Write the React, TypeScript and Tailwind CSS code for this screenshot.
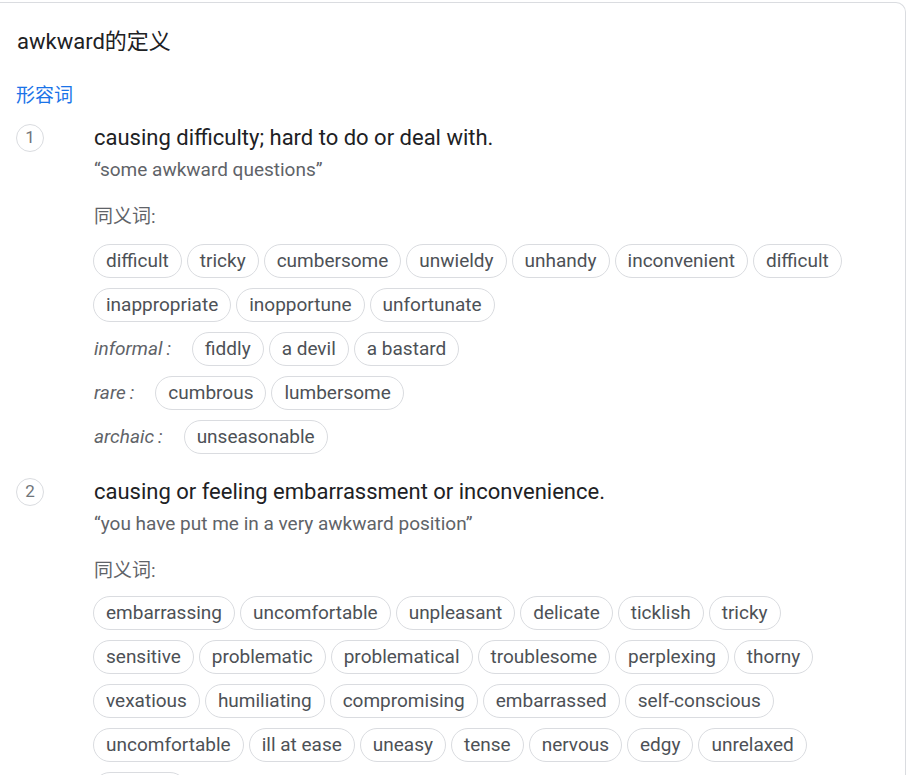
import React from "react";

type Group = { label?: string; words: string[] };
type Sense = { n: number; def: string; example: string; groups: Group[] };

const senses: Sense[] = [
  {
    n: 1,
    def: "causing difficulty; hard to do or deal with.",
    example: "“some awkward questions”",
    groups: [
      { words: ["difficult", "tricky", "cumbersome", "unwieldy", "unhandy", "inconvenient", "difficult", "inappropriate", "inopportune", "unfortunate"] },
      { label: "informal", words: ["fiddly", "a devil", "a bastard"] },
      { label: "rare", words: ["cumbrous", "lumbersome"] },
      { label: "archaic", words: ["unseasonable"] },
    ],
  },
  {
    n: 2,
    def: "causing or feeling embarrassment or inconvenience.",
    example: "“you have put me in a very awkward position”",
    groups: [
      {
        words: [
          "embarrassing", "uncomfortable", "unpleasant", "delicate", "ticklish", "tricky",
          "sensitive", "problematic", "problematical", "troublesome", "perplexing", "thorny",
          "vexatious", "humiliating", "compromising", "embarrassed", "self-conscious",
          "uncomfortable", "ill at ease", "uneasy", "tense", "nervous", "edgy", "unrelaxed",
          "strained",
        ],
      },
    ],
  },
];

const font = "font-['Roboto','Noto_Sans_CJK_SC',sans-serif]";

function Chip({ word }: { word: string }) {
  return (
    <span className="h-[34px] px-3 flex items-center rounded-full border border-[#dadce0] bg-white text-[19px] leading-6 text-[#4d5156] whitespace-nowrap">
      {word}
    </span>
  );
}

function SenseBlock({ s, first }: { s: Sense; first: boolean }) {
  return (
    <div className={`flex pl-[16px] ${first ? "mt-[16px]" : "mt-[24px]"}`}>
      <div className="w-[28px] h-[28px] rounded-full border border-[#dadce0] flex items-center justify-center text-[17px] text-[#70757a] shrink-0">
        {s.n}
      </div>
      <div className="ml-[50px] w-[780px]">
        <div className="text-[22px] leading-7 text-[#202124]">{s.def}</div>
        <div className="mt-[6px] text-[19px] leading-6 text-[#5f6368]">{s.example}</div>
        <div className="mt-[23px] text-[19px] leading-6 text-[#5f6368]">同义词:</div>
        <div className={`${first ? "mt-[15px]" : "mt-[13px]"} -ml-px flex flex-col gap-[10px]`}>
          {s.groups.map((g, gi) => (
            <div key={gi} className="flex flex-wrap gap-x-[5px] gap-y-[10px]">
              {g.label && (
                <span className="h-[34px] flex items-center pl-px mr-[16px] text-[19px] italic text-[#5f6368]">
                  {g.label}
                  <span className="ml-[4px]">:</span>
                </span>
              )}
              {g.words.map((w, i) => (
                <Chip key={i} word={w} />
              ))}
            </div>
          ))}
        </div>
      </div>
    </div>
  );
}

export default function App() {
  return (
    <div className={`min-h-screen bg-white pt-[2px] ${font}`}>
      <div className="w-[906px] border-t border-r border-[#dadce0] rounded-tr-[10px] bg-white pb-10">
        <div className="mt-[25px] pl-[17px] text-[22px] leading-7 text-[#202124]">awkward的定义</div>
        <div className="mt-[28px] pl-[16px] text-[19px] leading-6 text-[#1a73e8]">形容词</div>
        {senses.map((s, i) => (
          <SenseBlock key={s.n} s={s} first={i === 0} />
        ))}
      </div>
    </div>
  );
}
